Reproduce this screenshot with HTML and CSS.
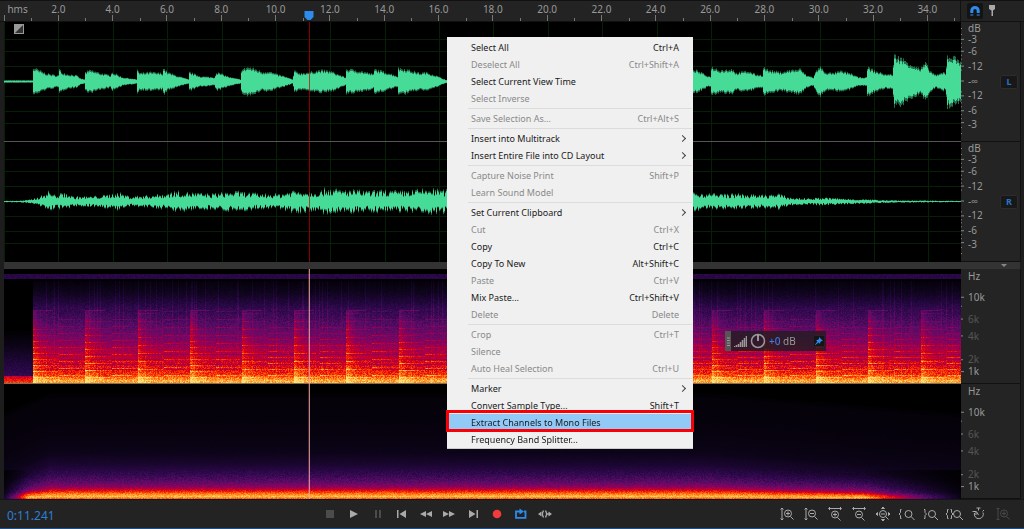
FILE: index.html
```
<!DOCTYPE html>
<html lang="en">
<head>
    <meta charset="utf-8">
    <title>Waveform Editor</title>
    <link rel="stylesheet" href="styles.css">
</head>
<body>
    <div class="editor">
        <header class="topbar">
            <div class="ruler">
                <span class="ruler-start">hms</span>
                <span>2.0</span><span>4.0</span><span>6.0</span><span>8.0</span><span>10.0</span><span>12.0</span>
                <span>14.0</span><span>16.0</span><span>18.0</span><span>20.0</span><span>22.0</span><span>24.0</span>
                <span>26.0</span><span>28.0</span><span>30.0</span><span>32.0</span><span>34.0</span>
                <span class="ruler-end"></span>
                <svg class="playhead" width="10" height="10" viewBox="0 0 10 10"><path d="M.5 0h9v6L6.500 9h-3L.5 6z" fill="#2d8ceb"/></svg>
            </div>
            <div class="topbar-tools">
                <button class="snap" aria-label="Toggle snapping">
                    <svg width="12" height="12" viewBox="0 0 12 12"><path d="M2.800 8V5.600a3.200 3.200 0 0 1 6.400 0V8" fill="none" stroke="#2d8ceb" stroke-width="3"/><path d="M1.300 9.200h3v1.600h-3zM7.700 9.200h3v1.600h-3z" fill="#2468ad"/></svg>
                </button>
                <button class="marker" aria-label="Add marker">
                    <svg width="8" height="12" viewBox="0 0 8 12"><path d="M1 0h6v4L5 5.500V11H3.500V5.500L1 4z" fill="#aaa"/></svg>
                </button>
            </div>
        </header>

        <section class="track wave-track">
            <canvas class="view wave" data-channel="left"></canvas>
            <svg class="fade" width="10" height="10" viewBox="0 0 10 10"><path d="M0 0h10v10H0z" fill="#999"/><path d="M9 1v8H1z" fill="#333"/></svg>
            <div class="axis">
                <svg class="ticks" viewBox="0 0 4 120" preserveAspectRatio="none"><path d="M0 17.500h3M0 29.500h3M0 44.500h3M0 59.500h3M0 74.500h3M0 89.500h3M0 101.500h3M0 6.500h1M0 12.500h1M0 21.500h1M0 25.500h1M0 33.500h1M0 37.500h1M0 41.500h1M0 48.500h1M0 70.500h1M0 78.500h1M0 81.500h1M0 85.500h1M0 93.500h1M0 97.500h1M0 106.500h1M0 112.500h1" stroke="#888"/></svg>
                <div class="scale db-scale">
                    <span>dB</span><span>-3</span><span>-6</span><span>-12</span><span class="infinity">-∞</span><span>-12</span><span>-6</span><span>-3</span>
                </div>
                <button class="channel">L</button>
            </div>
        </section>

        <section class="track wave-track">
            <canvas class="view wave" data-channel="right"></canvas>
            <div class="axis">
                <svg class="ticks" viewBox="0 0 4 120" preserveAspectRatio="none"><path d="M0 17.500h3M0 29.500h3M0 44.500h3M0 59.500h3M0 74.500h3M0 89.500h3M0 101.500h3M0 6.500h1M0 12.500h1M0 21.500h1M0 25.500h1M0 33.500h1M0 37.500h1M0 41.500h1M0 48.500h1M0 70.500h1M0 78.500h1M0 81.500h1M0 85.500h1M0 93.500h1M0 97.500h1M0 106.500h1M0 112.500h1" stroke="#888"/></svg>
                <div class="scale db-scale">
                    <span>dB</span><span>-3</span><span>-6</span><span>-12</span><span class="infinity">-∞</span><span>-12</span><span>-6</span><span>-3</span>
                </div>
                <button class="channel">R</button>
            </div>
        </section>

        <div class="splitter"></div>

        <section class="track spectral-track">
            <canvas class="view spectral" data-channel="left"></canvas>
            <div class="hud">
                <svg class="hud-grip" width="6" height="20" viewBox="0 0 6 20"><path d="M0 0h6v20H0z" fill="#555"/><path d="M2 7h3M2 9.500h3M2 12h3M2 14.500h3" stroke="#999"/></svg>
                <svg width="13" height="12" viewBox="0 0 13 12"><path d="M.5 12v-1M2.500 12v-2M4.500 12V9M6.500 12V7M8.500 12V5M10.500 12V3M12.500 12V1" stroke="#999" stroke-width="1.500"/></svg>
                <svg width="16" height="16" viewBox="0 0 16 16"><circle cx="8" cy="8" r="6.500" fill="none" stroke="#999" stroke-width="1.500"/><path d="M8 2v6" stroke="#bbb" stroke-width="1.500"/></svg>
                <span class="gain"><b>+0</b> dB</span>
                <button class="pin" aria-label="Pin">
                    <svg width="8" height="8" viewBox="0 0 8 8"><path d="M4 0l4 4-2 .3-1 1.500.2 1.200-1.700-1.500L.5 8l-.4-.5 2.300-3L1 3l1.500.1L4 2z" fill="#2d8ceb"/></svg>
                </button>
            </div>
            <div class="axis">
                <svg class="ticks" viewBox="0 0 4 115" preserveAspectRatio="none"><path d="M0 28.500h3M0 37.500h1M0 50.500h2M0 67.500h2M0 91.500h2M0 103.500h3" stroke="#888"/></svg>
                <div class="scale hz-scale">
                    <span>Hz</span><span>10k</span><span class="dim">6k</span><span class="dim">4k</span><span class="dim">2k</span><span>1k</span>
                </div>
            </div>
        </section>

        <section class="track spectral-track">
            <canvas class="view spectral" data-channel="right"></canvas>
            <div class="axis">
                <svg class="ticks" viewBox="0 0 4 115" preserveAspectRatio="none"><path d="M0 28.500h3M0 37.500h1M0 50.500h2M0 67.500h2M0 91.500h2M0 103.500h3" stroke="#888"/></svg>
                <div class="scale hz-scale">
                    <span>Hz</span><span>10k</span><span class="dim">6k</span><span class="dim">4k</span><span class="dim">2k</span><span>1k</span>
                </div>
            </div>
        </section>

        <footer class="transport">
            <output class="time">0:11.241</output>
            <div class="buttons">
                <button class="off" aria-label="Stop"><svg viewBox="0 0 16 16"><path d="M4 4h8v8H4z"/></svg></button>
                <button aria-label="Play"><svg viewBox="0 0 16 16"><path d="M4 4l8 4-8 4z"/></svg></button>
                <button class="off" aria-label="Pause"><svg viewBox="0 0 16 16"><path d="M5 4h2v8H5zM9 4h2v8H9z"/></svg></button>
                <button aria-label="Previous"><svg viewBox="0 0 16 16"><path d="M3 4h1.500v8H3zM12 4v8L5.500 8z"/></svg></button>
                <button aria-label="Rewind"><svg viewBox="0 0 16 16"><path d="M8 5v6L2 8zM14 5v6L8 8z"/></svg></button>
                <button aria-label="Fast forward"><svg viewBox="0 0 16 16"><path d="M1 5v6l6-3zM7 5v6l6-3z"/></svg></button>
                <button aria-label="Next"><svg viewBox="0 0 16 16"><path d="M10.500 4H12v8h-1.500zM3 4v8l6.500-4z"/></svg></button>
                <button class="record" aria-label="Record"><svg viewBox="0 0 16 16"><circle cx="7" cy="8" r="4.300"/></svg></button>
                <button class="loop" aria-label="Loop playback"><svg viewBox="0 0 16 16"><path d="M4 5.500H2v6.300h9.500V5.500H10M4 5.500h3" fill="none" stroke="#2d8ceb" stroke-width="1.800"/><path d="M5.500 2.500L10 5.500l-4.500 3z"/></svg></button>
                <button aria-label="Skip selection"><svg viewBox="0 0 16 16"><path d="M5.500 4.500L4.500 7v2l1 2.500M7.500 4.500l1 2.500v2l-1 2.500M8.500 8H12" fill="none" stroke="#aaa" stroke-width="1.300"/><path d="M10.500 5.500L14 8l-3.500 2.500zM3.500 5.500L0 8l3.500 2.500z"/></svg></button>
            </div>
            <div class="buttons zoom">
                <button aria-label="Zoom in amplitude"><svg viewBox="0 0 16 16"><path d="M3 3v10M1.500 3.500L3 2l1.500 1.500M1.500 12.500L3 14l1.500-1.500M11.500 10.500L14.500 13.500M9 5.500v4M7 7.500h4"/><circle cx="9" cy="7.500" r="3.500"/></svg></button>
                <button aria-label="Zoom out amplitude"><svg viewBox="0 0 16 16"><path d="M3 3v10M1.500 3.500L3 2l1.500 1.500M1.500 12.500L3 14l1.500-1.500M11.500 10.500L14.500 13.500M7 7.500h4"/><circle cx="9" cy="7.500" r="3.500"/></svg></button>
                <button aria-label="Zoom in time"><svg viewBox="0 0 16 16"><path d="M2 2.500h12M3 1L1.500 2.500 3 4M13 1l1.500 1.500L13 4M10.500 11.500l3 3M8 6.500v4M6 8.500h4"/><circle cx="8" cy="8.500" r="3.500"/></svg></button>
                <button aria-label="Zoom out time"><svg viewBox="0 0 16 16"><path d="M2 2.500h12M3 1L1.500 2.500 3 4M13 1l1.500 1.500L13 4M10.500 11.500l3 3M6 8.500h4"/><circle cx="8" cy="8.500" r="3.500"/></svg></button>
                <button aria-label="Zoom out full"><svg viewBox="0 0 16 16"><path d="M10.500 10.500l3 3M6 8h4M6.500 2.500L8 1l1.500 1.500zM6.500 13.500L8 15l1.500-1.500zM2.500 6.500L1 8l1.500 1.500zM13.500 6.500L15 8l-1.500 1.500z"/><circle cx="8" cy="8" r="3.500"/></svg></button>
                <button aria-label="Zoom in at in point"><svg viewBox="0 0 16 16"><path d="M2.500 3.500h-1v3L0 8l1.500 1.500v3h1M12 10.500l3.500 3.500"/><circle cx="9.500" cy="8" r="3.500"/></svg></button>
                <button aria-label="Zoom in at out point"><svg viewBox="0 0 16 16"><path d="M1 3.500h1v3L3.500 8 2 9.500v3H1M11.500 10.500L15 14"/><circle cx="9" cy="8" r="3.500"/></svg></button>
                <button aria-label="Zoom to selection"><svg viewBox="0 0 16 16"><path d="M1.500 3.500h-1v3L-1 8 .5 9.500v3h1M3.500 3.500h1v3L6 8 4.500 9.500v3h-1M12.500 10.500L16 14"/><circle cx="10" cy="8" r="3.500"/></svg></button>
                <button aria-label="Reset zoom"><svg viewBox="0 0 16 16"><path d="M3.500 7a4.500 4.500 0 1 0 8.500-.5M7.500 9L5.500 5.500M7.500 4.500V2M5.500 2h4M1.500 5.500h3.500V9M11.500 5.500L13 4"/></svg></button>
                <button class="off" aria-label="Zoom selected track"><svg viewBox="0 0 16 16"><path d="M3 3v10M1.500 2.500h3M1.500 13.500h3M11.500 10.500L14.500 13.500M9 5.500v4M7 7.500h4"/><circle cx="9" cy="7.500" r="3.500"/></svg></button>
            </div>
        </footer>
    </div>

    <div class="menu" role="menu">
        <button role="menuitem">Select All <span>Ctrl+A</span></button>
        <button role="menuitem" disabled>Deselect All <span>Ctrl+Shift+A</span></button>
        <button role="menuitem">Select Current View Time</button>
        <button role="menuitem" disabled>Select Inverse</button>
        <hr>
        <button role="menuitem" disabled>Save Selection As... <span>Ctrl+Alt+S</span></button>
        <hr>
        <button role="menuitem" class="submenu">Insert into Multitrack</button>
        <button role="menuitem" class="submenu">Insert Entire File into CD Layout</button>
        <hr>
        <button role="menuitem" disabled>Capture Noise Print <span>Shift+P</span></button>
        <button role="menuitem" disabled>Learn Sound Model</button>
        <hr>
        <button role="menuitem" class="submenu">Set Current Clipboard</button>
        <button role="menuitem" disabled>Cut <span>Ctrl+X</span></button>
        <button role="menuitem">Copy <span>Ctrl+C</span></button>
        <button role="menuitem">Copy To New <span>Alt+Shift+C</span></button>
        <button role="menuitem" disabled>Paste <span>Ctrl+V</span></button>
        <button role="menuitem">Mix Paste... <span>Ctrl+Shift+V</span></button>
        <button role="menuitem" disabled>Delete <span>Delete</span></button>
        <hr>
        <button role="menuitem" disabled>Crop <span>Ctrl+T</span></button>
        <button role="menuitem" disabled>Silence</button>
        <button role="menuitem" disabled>Auto Heal Selection <span>Ctrl+U</span></button>
        <hr>
        <button role="menuitem" class="submenu">Marker</button>
        <button role="menuitem">Convert Sample Type... <span>Shift+T</span></button>
        <button role="menuitem" class="selected">Extract Channels to Mono Files</button>
        <button role="menuitem">Frequency Band Splitter...</button>
    </div>

    <script src="script.js"></script>
</body>
</html>
```
FILE: styles.css
```
* {
    box-sizing: border-box;
}
body {
    margin: 0;
    background-color: #1d1d1d;
    color: #999;
    font-family: "Noto Sans", "Open Sans", sans-serif;
    font-size: 10px;
}
button {
    margin: 0;
    padding: 0;
    border: none;
    background: none;
    color: inherit;
    font: inherit;
}
svg {
    display: block;
}
.editor {
    display: flex;
    flex-direction: column;
    height: 100vh;
    min-height: 480px;
    border-bottom: 1px solid #1f4f87;
}

/* time ruler */
.topbar {
    display: flex;
    flex: 0 0 22px;
    padding-left: 4px;
    border-top: 1px solid #111;
    border-bottom: 1px solid #111;
    background-color: #232323;
}
.ruler {
    position: relative;
    display: flex;
    flex: 1;
    border-right: 1px solid #111;
}
.ruler span {
    flex: 2 1 0;
    min-width: 0;
    line-height: 16px;
    text-align: center;
    background-image: linear-gradient(#777, #777), linear-gradient(#777, #777);
    background-position: center bottom, left bottom;
    background-size: 1px 6px, 1px 3px;
    background-repeat: no-repeat;
}
.ruler .ruler-start {
    flex-grow: 1;
    text-align: center;
    white-space: nowrap;
    background-image: linear-gradient(#777, #777);
    background-position: left bottom;
    background-size: 1px 6px;
}
.ruler .ruler-end {
    flex-grow: 0.2;
    background-image: linear-gradient(#777, #777);
    background-position: left bottom;
    background-size: 1px 3px;
}
.playhead {
    position: absolute;
    left: 31.9%;
    bottom: 0;
    margin-left: -5px;
}
.topbar-tools {
    display: flex;
    align-items: center;
    flex: 0 0 63px;
    padding-left: 6px;
    gap: 1px;
}
.snap,
.marker {
    display: flex;
    align-items: center;
    justify-content: center;
    width: 16px;
    height: 16px;
}
.snap {
    background-color: #141414;
    border-radius: 2px;
}

/* tracks */
.track {
    position: relative;
    display: flex;
    min-height: 0;
    padding: 0 3px 0 4px;
}
.wave-track {
    flex: 120 1 0;
}
.spectral-track {
    flex: 115 1 0;
}
.view {
    flex: 1;
    min-width: 0;
    width: 0;
    height: 100%;
    background-color: #000;
}
.axis {
    display: flex;
    flex: 0 0 60px;
    border-right: 1px solid #111;
    border-bottom: 1px solid #111;
    background-color: #242424;
}
.ticks {
    flex: 0 0 4px;
    width: 4px;
    height: 100%;
}
.scale {
    display: grid;
    flex: 1;
    padding-left: 3px;
}
.scale span {
    display: flex;
    align-items: center;
    min-height: 0;
    line-height: 10px;
}
.db-scale {
    grid-template-rows: 12fr 11fr 13fr 16fr 15fr 14fr 16fr 11fr 12fr;
}
.hz-scale {
    grid-template-rows: 14fr 29fr 14fr 21fr 6fr 13fr 12fr 6fr;
}
.hz-scale span:nth-child(5) {
    grid-row: 6;
}
.hz-scale span:nth-child(6) {
    grid-row: 7;
}
.scale .dim {
    color: #555;
}
.channel {
    align-self: center;
    width: 18px;
    height: 14px;
    margin-right: 2px;
    border: 1px solid #2c2c2c;
    border-radius: 2px;
    background-color: #181818;
    color: #2673c4;
    font-size: 9px;
    font-weight: bold;
    line-height: 12px;
}
.fade {
    position: absolute;
    left: 14px;
    top: 2px;
}
.splitter {
    display: flex;
    flex: 0 0 7px;
    align-items: center;
    justify-content: flex-end;
    margin: 0 4px;
    padding-right: 13px;
    background-color: #333;
}
.splitter::after {
    content: "";
    border: 3px solid transparent;
    border-top-color: #888;
    border-bottom-width: 0;
}

/* gain control floating over the spectrum */
.hud {
    position: absolute;
    left: 725px;
    top: 62px;
    display: flex;
    align-items: center;
    width: 101px;
    height: 20px;
    gap: 3px;
    background-color: rgba(35, 28, 35, 0.85);
}
.gain b {
    color: #3b7de0;
    font-weight: 500;
}
.pin {
    display: flex;
    align-items: center;
    justify-content: center;
    width: 10px;
    height: 10px;
    margin-left: auto;
    margin-right: 2px;
    background-color: #151515;
}

/* transport */
.transport {
    display: flex;
    flex: 0 0 29px;
    align-items: center;
    padding: 0 9px 0 7px;
    background-color: #232323;
    border-top: 1px solid #151515;
}
.time {
    width: 311px;
    padding-top: 4px;
    color: #2e7fd6;
    font-size: 12px;
    line-height: 16px;
}
.buttons {
    display: flex;
}
.buttons button {
    display: flex;
    align-items: center;
    justify-content: center;
    width: 24px;
    height: 24px;
}
.buttons svg {
    width: 16px;
    height: 16px;
    fill: #aaa;
    overflow: visible;
}
.buttons .off svg {
    fill: #4c4c4c;
}
.buttons .record svg {
    fill: #f33b3b;
}
.buttons .loop svg {
    fill: #2d8ceb;
}
.zoom {
    margin-left: auto;
}
.zoom svg,
.zoom .off svg {
    fill: none;
    stroke: #aaa;
}
.zoom .off svg {
    stroke: #484848;
}

/* context menu */
.menu {
    position: absolute;
    left: 447px;
    top: 37px;
    width: 246px;
    padding-top: 2px;
    border-bottom: 1px solid #ccc;
    background-color: #f0f0f0;
    color: #1a1a1a;
    font-size: 9px;
}
.menu button {
    position: relative;
    display: flex;
    align-items: center;
    justify-content: space-between;
    width: 100%;
    height: 17px;
    padding: 0 14px 0 24px;
    white-space: nowrap;
}
.menu button:disabled {
    color: #8a8a8a;
}
.menu hr {
    height: 1px;
    margin: 1px 1px 1px 21px;
    border: none;
    background-color: #dcdcdc;
}
.menu .submenu::after {
    content: "";
    width: 4px;
    height: 4px;
    margin-right: -6px;
    border-top: 1px solid #444;
    border-right: 1px solid #444;
    transform: rotate(45deg);
}
.menu .selected {
    background-color: #91c9f7;
}
.menu .selected::after {
    content: "";
    position: absolute;
    inset: -4px -1px -1px;
    border: 3px solid #f80006;
}
```
FILE: script.js
```
const DURATION = 35.2;
const PLAYHEAD = 11.241;
const BASE_WIDTH = 957;

// [x, amplitude] points along the clip
const envelopes = {
    left: [
        [0, 1], [28, 1], [29, 13], [32, 12], [41, 8], [51, 6], [54, 6], [55, 12], [57, 9], [63, 7], [72, 6], [76, 3],
        [80, 2], [81, 9], [86, 11], [96, 8], [106, 6], [107, 9], [112, 7], [118, 4], [126, 3], [132, 2], [133, 12],
        [135, 8], [146, 9], [158, 8], [159, 13], [163, 9], [171, 6], [181, 3], [184, 2], [185, 9], [196, 5], [210, 4],
        [212, 9], [218, 7], [226, 4], [236, 2], [237, 11], [243, 14], [251, 12], [258, 9], [264, 10], [272, 7],
        [280, 5], [288, 2], [290, 10], [296, 8], [305, 9], [316, 11], [326, 10], [336, 6], [341, 4], [342, 12],
        [351, 11], [361, 9], [369, 7], [370, 12], [381, 9], [391, 6], [393, 5], [394, 13], [401, 12], [408, 10],
        [416, 8], [421, 9], [431, 6], [438, 3], [443, 1], [500, 6], [600, 10], [689, 12], [696, 9], [704, 5],
        [706, 5], [707, 14], [716, 11], [729, 12], [731, 8], [736, 9], [744, 10], [751, 7], [758, 6], [759, 14],
        [764, 11], [776, 9], [786, 11], [796, 12], [802, 6], [809, 4], [812, 11], [816, 14], [821, 9], [828, 8],
        [836, 10], [846, 8], [854, 4], [862, 4], [863, 14], [871, 10], [881, 7], [888, 7], [890, 25], [896, 23],
        [906, 17], [916, 12], [921, 18], [926, 10], [932, 6], [939, 9], [941, 8], [943, 25], [951, 23], [957, 20]
    ],
    right: [
        [0, 0.5], [18, 0.7], [26, 1.5], [36, 4], [44, 8], [51, 5], [61, 7], [68, 4], [86, 4], [101, 5], [114, 7],
        [126, 4], [146, 5], [161, 6], [171, 8], [186, 7], [206, 6], [231, 8], [256, 6], [276, 6], [289, 9], [306, 8],
        [316, 8], [322, 11], [336, 9], [350, 9], [365, 8], [380, 9], [395, 8], [410, 9], [425, 10], [440, 9],
        [600, 8], [689, 7], [716, 6], [736, 6], [756, 5], [774, 6], [786, 3], [801, 2.5], [821, 3], [846, 2],
        [876, 1.2], [896, 0.8], [957, 0.5]
    ]
};

// [level, r, g, b]
const palette = [
    [0, 0, 0, 0], [0.1, 12, 4, 24], [0.25, 42, 8, 72], [0.4, 92, 12, 104], [0.52, 150, 0, 88],
    [0.64, 212, 0, 28], [0.74, 250, 50, 0], [0.86, 255, 140, 30], [1, 255, 224, 110]
];

// [y, level] from the top to the bottom of the spectrum
const levels = {
    left: [
        [0, 0], [4, 0], [5, 0.24], [9, 0.24], [10, 0], [13, 0.05], [26, 0.14], [40, 0.28], [55, 0.39], [70, 0.48],
        [80, 0.56], [92, 0.63], [100, 0.69], [106, 0.76], [111, 0.93], [115, 0.9]
    ],
    right: [
        [0, 0], [8, 0], [14, 0.04], [50, 0.06], [68, 0.1], [80, 0.17], [90, 0.28], [98, 0.4], [103, 0.52],
        [106, 0.66], [109, 0.82], [112, 0.94], [115, 0.74]
    ]
};

let seed = 7;
function random() {
    seed = (seed * 16807) % 2147483647;
    return seed / 2147483647;
}

function lerp(points, x) {
    for (let i = 1; i < points.length; i++) {
        if (x <= points[i][0]) {
            const a = points[i - 1];
            const b = points[i];
            const k = (x - a[0]) / (b[0] - a[0]);
            return a.slice(1).map((v, n) => v + (b[n + 1] - v) * k);
        }
    }
    return points[points.length - 1].slice(1);
}

function drawWave(canvas) {
    const w = canvas.width = canvas.clientWidth;
    const h = canvas.height = canvas.clientHeight;
    const ctx = canvas.getContext('2d');
    const mid = Math.floor((h - 1) / 2);
    const left = canvas.dataset.channel === 'left';
    const unit = h / 120;

    ctx.fillStyle = '#062006';
    for (let t = 0; t < DURATION; t += 2) {
        ctx.fillRect(Math.round(t / DURATION * w), 0, 1, h);
    }
    [-42, -30, -15, 15, 30, 42].forEach(y => ctx.fillRect(0, Math.round(mid + y * unit), w, 1));

    for (let x = 0; x < w; x++) {
        const amp = lerp(envelopes[canvas.dataset.channel], x / w * BASE_WIDTH)[0] * unit;
        const rough = left ? 0.25 : 0.8;
        const up = amp * (1 - rough / 2 + random() * rough);
        const down = amp * (1 - rough / 2 + random() * rough);
        ctx.fillStyle = 'rgba(70, 220, 152, 0.5)';
        ctx.fillRect(x, mid + 0.5 - up, 1, up + down);
        ctx.fillStyle = '#46dc98';
        ctx.fillRect(x, mid + 0.5 - up * 0.85, 1, (up + down) * 0.85);
    }

    ctx.fillStyle = 'rgba(190, 0, 0, 0.7)';
    ctx.fillRect(Math.floor(PLAYHEAD / DURATION * w), 0, 1, h);
    if (left) {
        ctx.fillStyle = '#555';
        ctx.fillRect(0, h - 1, w, 1);
    }
}

function drawSpectrum(canvas) {
    const w = canvas.width = canvas.clientWidth;
    const h = canvas.height = canvas.clientHeight;
    const ctx = canvas.getContext('2d');
    const image = ctx.createImageData(w, h);
    const channel = canvas.dataset.channel;
    const step = 26.1;

    // the partials of every note
    const notes = [];
    for (let i = 0; i < 37; i++) {
        const lines = {};
        const base = i % 2 ? 106 : 108;
        const space = 6 + Math.floor(random() * 3);
        for (let n = 0; n < 9; n++) {
            lines[base - n * space] = 0.18 - n * 0.01;
        }
        notes.push(lines);
    }

    for (let x = 0; x < w; x++) {
        const px = x / w * BASE_WIDTH;
        const note = Math.floor((px - 28.7) / step);
        const since = px - 28.7 - note * step;
        const pairSince = since + (note % 2 ? step : 0);
        const streak = random() < 0.1 ? 0.06 : (random() - 0.5) * 0.02;
        for (let y = 0; y < h; y++) {
            const py = y / h * 115;
            let v = lerp(levels[channel], py)[0];
            let noise = (random() - 0.5) * 0.11;
            if (channel === 'left') {
                if (py > 11 && px < 28.7) {
                    v = py > 106 ? 0.58 + (py - 106) * 0.025 : Math.max(0, (py - 60) * 0.006);
                } else if (py > 11) {
                    v += streak * (py < 60 ? 1 : 0.5);
                    if (py > 41) {
                        v += 0.15 * Math.exp(-pairSince / 7) - 0.02;
                        const line = notes[note] && notes[note][Math.round(py)];
                        if (line) {
                            v += line * Math.exp(-since / 24);
                        } else if (py > 84 && py < 104 && Math.round(py) % 5 === 0) {
                            v -= 0.07;
                        }
                    }
                    if (py > 90) {
                        noise *= 1.5;
                    }
                    if (Math.round(py) === 41 && pairSince < 20) {
                        v += 0.12;
                    }
                }
            } else {
                // fades in over the first seconds and out at the end
                const fade = Math.min(1, px / 45, (BASE_WIDTH - px) / 250);
                const lift = (1 - fade) * 20 * Math.min(1, (115 - py) / 25);
                v = lerp(levels.right, Math.max(0, py - lift))[0];
                if (py > 85) {
                    v *= Math.min(1, 0.2 + px / 30, 0.1 + (BASE_WIDTH - px) / 110);
                }
                noise *= py > 85 ? 1 : 0.3;
            }
            if (v > 0) {
                v = Math.max(0, Math.min(1, v + noise * Math.min(1, v * 3)));
            }
            const c = lerp(palette, v);
            const i = (y * w + x) * 4;
            image.data[i] = c[0];
            image.data[i + 1] = c[1];
            image.data[i + 2] = c[2];
            image.data[i + 3] = 255;
        }
    }
    ctx.putImageData(image, 0, 0);
    if (channel === 'left') {
        ctx.fillStyle = '#77735c';
        ctx.fillRect(0, h - 1, w, 1);
    }
    const head = Math.floor(PLAYHEAD / DURATION * w);
    ctx.fillStyle = 'rgba(235, 150, 150, 0.25)';
    ctx.fillRect(head - 1, 0, 1, h);
    ctx.fillStyle = 'rgba(240, 165, 160, 0.8)';
    ctx.fillRect(head, 0, 1, h);
}

function draw() {
    seed = 7;
    document.querySelectorAll('.wave').forEach(drawWave);
    document.querySelectorAll('.spectral').forEach(drawSpectrum);
}

window.addEventListener('resize', draw);
draw();
```
